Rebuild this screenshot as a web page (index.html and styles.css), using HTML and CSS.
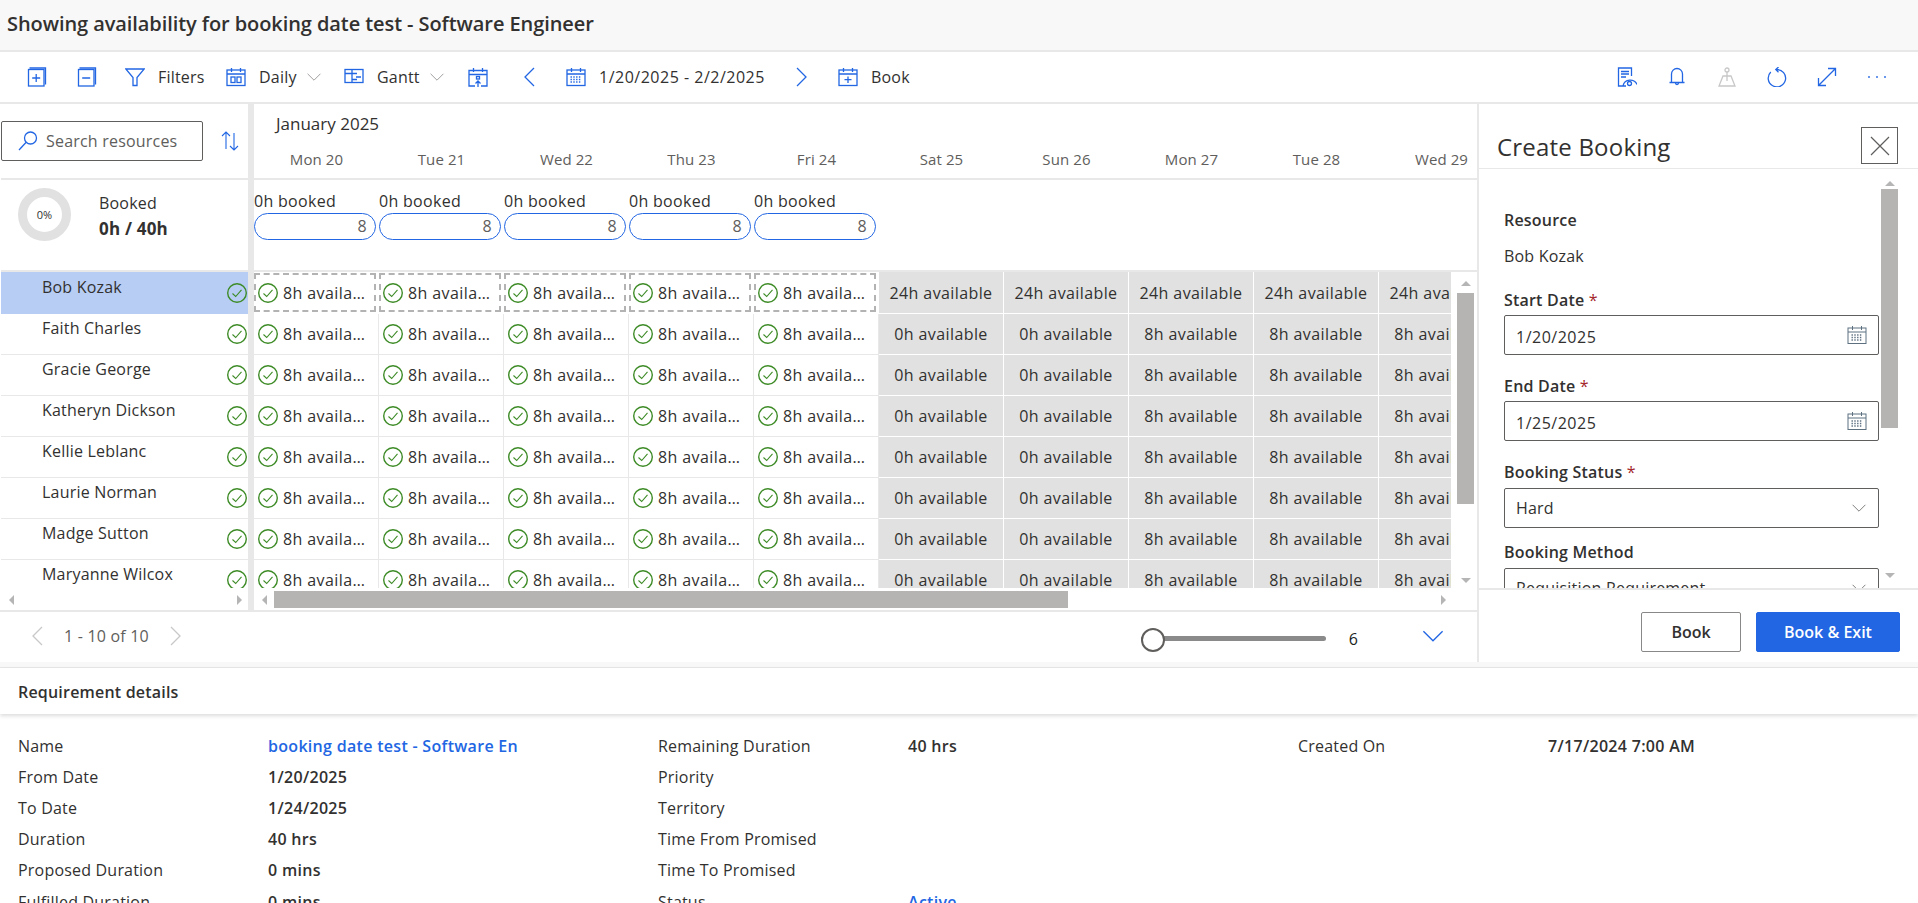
FILE: index.html
```html
<!DOCTYPE html>
<html lang="en">
  <head>
    <meta charset="UTF-8" />
    <title>Showing availability</title>
    <link rel="stylesheet" href="styles.css">
  </head>
  <body>
    <!-- Icon sprite -->
    <svg class="sprite">
      <symbol id="i-expand-all" viewBox="0 0 20 20"><rect x="1.5" y="2.5" width="15.5" height="16.5"/><path d="M2.5 1H18.5V17.5M9.2 7v8M5.2 11h8"/></symbol>
      <symbol id="i-collapse-all" viewBox="0 0 20 20"><rect x="1.5" y="2.5" width="15.5" height="16.5"/><path d="M2.5 1H18.5V17.5M5.2 11h8"/></symbol>
      <symbol id="i-filter" viewBox="0 0 20 20"><path d="M.8 2H19.2L12 10.5V18.5H8V10.5Z"/></symbol>
      <symbol id="i-daily" viewBox="0 0 20 20"><rect x="1" y="3" width="18" height="15.5"/><path d="M1 7H19M5.5 1v4M14.5 1v4"/><rect x="5" y="10" width="4" height="5.5"/><rect x="11" y="10" width="4" height="5.5"/></symbol>
      <symbol id="i-gantt" viewBox="0 0 20 20"><rect x="1" y="2.5" width="18" height="13"/><path d="M1 6.5H8M8 2.5V15.5M8 6.5H13M12 10H17M8 12.5H13"/></symbol>
      <symbol id="i-cal-up" viewBox="0 0 20 20"><path d="M7 19H1V3.5H19V19H13M1 7.5H19M5.5 1v4M14.5 1v4M10 20V14M7.5 16.5L10 14L12.5 16.5"/><rect x="8.5" y="9.5" width="3" height="2.5"/></symbol>
      <symbol id="i-left" viewBox="0 0 20 20"><path d="M14 1L5 10L14 19"/></symbol>
      <symbol id="i-right" viewBox="0 0 20 20"><path d="M6 1L15 10L6 19"/></symbol>
      <symbol id="i-cal-grid" viewBox="0 0 20 20"><rect x="1" y="3" width="18" height="15.5"/><path d="M1 7H19M5.5 1v4M14.5 1v4"/><path class="dotted" d="M4.5 10h11M4.5 12.5h11M4.5 15h11"/></symbol>
      <symbol id="i-book" viewBox="0 0 20 20"><rect x="1" y="3" width="18" height="15.5"/><path d="M1 7H19M5.5 1v4M14.5 1v4M10 9.5v6.5M6.5 12.7h7"/></symbol>
      <symbol id="i-report" viewBox="0 0 20 20"><path d="M9 19H1.5V1H14.5V9M4 4.5H12M4 7H12M4 10H9M6 19C7.5 11.5 17.5 11.5 20 17.5"/><circle cx="12.5" cy="16.5" r="2"/></symbol>
      <symbol id="i-bell" viewBox="0 0 20 20"><path d="M4.5 15.5V7a5.5 5.5 0 0 1 11 0v8.5M2.5 15.5H17.5M8.5 16a1.5 1.5 0 0 0 3 0"/></symbol>
      <symbol id="i-pin" viewBox="0 0 20 20"><circle cx="10" cy="3" r="2"/><path d="M10 5V14M6 9H14L18 19H2Z"/></symbol>
      <symbol id="i-refresh" viewBox="0 0 20 20"><path d="M9.5 2.5A8.7 8.7 0 1 1 3.8 5M11.5 0L8.8 2.6L11.5 5.2"/></symbol>
      <symbol id="i-fullscreen" viewBox="0 0 20 20"><path d="M1.5 18.5L18.5 1.5M11 1.5H18.5V9M1.5 11V18.5H9"/></symbol>
      <symbol id="i-more" viewBox="0 0 20 20"><path class="dots" d="M2 10h.01M10 10h.01M18 10h.01"/></symbol>
      <symbol id="i-search" viewBox="0 0 20 20"><circle cx="12.5" cy="7" r="6"/><path d="M8.2 11.3L1 19"/></symbol>
      <symbol id="i-sort" viewBox="0 0 20 20"><path d="M6 1V18M2 5L6 1L10 5M14 2V19M10 15L14 19L18 15"/></symbol>
      <symbol id="i-down" viewBox="0 0 20 20"><path d="M2 6L10 14L18 6"/></symbol>
      <symbol id="i-close" viewBox="0 0 20 20"><path d="M1 1L19 19M19 1L1 19"/></symbol>
      <symbol id="i-ok" viewBox="0 0 20 20"><circle cx="10" cy="10" r="9.3"/><path class="tick" d="M5.5 10.5L8.7 13.5L14.5 6.8"/></symbol>
    </svg>

    <header class="title-bar">Showing availability for booking date test - Software Engineer</header>

    <nav class="toolbar">
      <div class="tool"><svg class="ico"><use href="#i-expand-all"/></svg></div>
      <div class="tool"><svg class="ico"><use href="#i-collapse-all"/></svg></div>
      <div class="tool"><svg class="ico"><use href="#i-filter"/></svg><span>Filters</span></div>
      <div class="tool"><svg class="ico"><use href="#i-daily"/></svg><span>Daily</span><svg class="ico-chev"><use href="#i-down"/></svg></div>
      <div class="tool"><svg class="ico"><use href="#i-gantt"/></svg><span>Gantt</span><svg class="ico-chev"><use href="#i-down"/></svg></div>
      <div class="tool"><svg class="ico"><use href="#i-cal-up"/></svg></div>
      <div class="tool"><svg class="ico"><use href="#i-left"/></svg></div>
      <div class="tool"><svg class="ico"><use href="#i-cal-grid"/></svg><span class="num">1/20/2025 - 2/2/2025</span></div>
      <div class="tool"><svg class="ico"><use href="#i-right"/></svg></div>
      <div class="tool"><svg class="ico"><use href="#i-book"/></svg><span>Book</span></div>
      <div class="tool-end">
        <svg class="ico"><use href="#i-report"/></svg>
        <svg class="ico"><use href="#i-bell"/></svg>
        <svg class="ico ico-off"><use href="#i-pin"/></svg>
        <svg class="ico"><use href="#i-refresh"/></svg>
        <svg class="ico"><use href="#i-fullscreen"/></svg>
        <svg class="ico"><use href="#i-more"/></svg>
      </div>
    </nav>

    <div class="workspace">
      <section class="board">
        <div class="board-main">
          <!-- Resource column -->
          <div class="res-col">
            <div class="band-top res-search">
              <div class="search-box"><svg class="ico-search"><use href="#i-search"/></svg><span>Search resources</span></div>
              <svg class="ico-sort"><use href="#i-sort"/></svg>
            </div>
            <div class="band-sum res-sum">
              <div class="ring">0%</div>
              <div class="res-sum-text">
                <div>Booked</div>
                <div class="strong">0h / 40h</div>
              </div>
            </div>
            <div class="names">
              <div class="name-row selected"><span>Bob Kozak</span><svg class="ok"><use href="#i-ok"/></svg></div>
              <div class="name-row"><span>Faith Charles</span><svg class="ok"><use href="#i-ok"/></svg></div>
              <div class="name-row"><span>Gracie George</span><svg class="ok"><use href="#i-ok"/></svg></div>
              <div class="name-row"><span>Katheryn Dickson</span><svg class="ok"><use href="#i-ok"/></svg></div>
              <div class="name-row"><span>Kellie Leblanc</span><svg class="ok"><use href="#i-ok"/></svg></div>
              <div class="name-row"><span>Laurie Norman</span><svg class="ok"><use href="#i-ok"/></svg></div>
              <div class="name-row"><span>Madge Sutton</span><svg class="ok"><use href="#i-ok"/></svg></div>
              <div class="name-row"><span>Maryanne Wilcox</span><svg class="ok"><use href="#i-ok"/></svg></div>
            </div>
            <div class="hbar hbar-res"><i class="arrow-left"></i><i class="arrow-right"></i></div>
          </div>

          <!-- Schedule -->
          <div class="sched-col">
            <div class="band-top sched-head">
              <div class="month">January 2025</div>
              <div class="days">
                <div>Mon 20</div><div>Tue 21</div><div>Wed 22</div><div>Thu 23</div><div>Fri 24</div>
                <div>Sat 25</div><div>Sun 26</div><div>Mon 27</div><div>Tue 28</div><div>Wed 29</div>
              </div>
            </div>
            <div class="band-sum totals">
              <div class="total"><div>0h booked</div><div class="pill">8</div></div>
              <div class="total"><div>0h booked</div><div class="pill">8</div></div>
              <div class="total"><div>0h booked</div><div class="pill">8</div></div>
              <div class="total"><div>0h booked</div><div class="pill">8</div></div>
              <div class="total"><div>0h booked</div><div class="pill">8</div></div>
            </div>
            <div class="sched-body">
              <div class="grid">
                <div class="row row-first">
                  <div class="cell picked"><svg class="ok"><use href="#i-ok"/></svg><span>8h available</span></div>
                  <div class="cell picked"><svg class="ok"><use href="#i-ok"/></svg><span>8h available</span></div>
                  <div class="cell picked"><svg class="ok"><use href="#i-ok"/></svg><span>8h available</span></div>
                  <div class="cell picked"><svg class="ok"><use href="#i-ok"/></svg><span>8h available</span></div>
                  <div class="cell picked"><svg class="ok"><use href="#i-ok"/></svg><span>8h available</span></div>
                  <div class="off">24h available</div><div class="off">24h available</div><div class="off">24h available</div><div class="off">24h available</div><div class="off">24h available</div>
                </div>
                <div class="row">
                  <div class="cell"><svg class="ok"><use href="#i-ok"/></svg><span>8h available</span></div>
                  <div class="cell"><svg class="ok"><use href="#i-ok"/></svg><span>8h available</span></div>
                  <div class="cell"><svg class="ok"><use href="#i-ok"/></svg><span>8h available</span></div>
                  <div class="cell"><svg class="ok"><use href="#i-ok"/></svg><span>8h available</span></div>
                  <div class="cell"><svg class="ok"><use href="#i-ok"/></svg><span>8h available</span></div>
                  <div class="off">0h available</div><div class="off">0h available</div><div class="off">8h available</div><div class="off">8h available</div><div class="off">8h available</div>
                </div>
                <div class="row">
                  <div class="cell"><svg class="ok"><use href="#i-ok"/></svg><span>8h available</span></div>
                  <div class="cell"><svg class="ok"><use href="#i-ok"/></svg><span>8h available</span></div>
                  <div class="cell"><svg class="ok"><use href="#i-ok"/></svg><span>8h available</span></div>
                  <div class="cell"><svg class="ok"><use href="#i-ok"/></svg><span>8h available</span></div>
                  <div class="cell"><svg class="ok"><use href="#i-ok"/></svg><span>8h available</span></div>
                  <div class="off">0h available</div><div class="off">0h available</div><div class="off">8h available</div><div class="off">8h available</div><div class="off">8h available</div>
                </div>
                <div class="row">
                  <div class="cell"><svg class="ok"><use href="#i-ok"/></svg><span>8h available</span></div>
                  <div class="cell"><svg class="ok"><use href="#i-ok"/></svg><span>8h available</span></div>
                  <div class="cell"><svg class="ok"><use href="#i-ok"/></svg><span>8h available</span></div>
                  <div class="cell"><svg class="ok"><use href="#i-ok"/></svg><span>8h available</span></div>
                  <div class="cell"><svg class="ok"><use href="#i-ok"/></svg><span>8h available</span></div>
                  <div class="off">0h available</div><div class="off">0h available</div><div class="off">8h available</div><div class="off">8h available</div><div class="off">8h available</div>
                </div>
                <div class="row">
                  <div class="cell"><svg class="ok"><use href="#i-ok"/></svg><span>8h available</span></div>
                  <div class="cell"><svg class="ok"><use href="#i-ok"/></svg><span>8h available</span></div>
                  <div class="cell"><svg class="ok"><use href="#i-ok"/></svg><span>8h available</span></div>
                  <div class="cell"><svg class="ok"><use href="#i-ok"/></svg><span>8h available</span></div>
                  <div class="cell"><svg class="ok"><use href="#i-ok"/></svg><span>8h available</span></div>
                  <div class="off">0h available</div><div class="off">0h available</div><div class="off">8h available</div><div class="off">8h available</div><div class="off">8h available</div>
                </div>
                <div class="row">
                  <div class="cell"><svg class="ok"><use href="#i-ok"/></svg><span>8h available</span></div>
                  <div class="cell"><svg class="ok"><use href="#i-ok"/></svg><span>8h available</span></div>
                  <div class="cell"><svg class="ok"><use href="#i-ok"/></svg><span>8h available</span></div>
                  <div class="cell"><svg class="ok"><use href="#i-ok"/></svg><span>8h available</span></div>
                  <div class="cell"><svg class="ok"><use href="#i-ok"/></svg><span>8h available</span></div>
                  <div class="off">0h available</div><div class="off">0h available</div><div class="off">8h available</div><div class="off">8h available</div><div class="off">8h available</div>
                </div>
                <div class="row">
                  <div class="cell"><svg class="ok"><use href="#i-ok"/></svg><span>8h available</span></div>
                  <div class="cell"><svg class="ok"><use href="#i-ok"/></svg><span>8h available</span></div>
                  <div class="cell"><svg class="ok"><use href="#i-ok"/></svg><span>8h available</span></div>
                  <div class="cell"><svg class="ok"><use href="#i-ok"/></svg><span>8h available</span></div>
                  <div class="cell"><svg class="ok"><use href="#i-ok"/></svg><span>8h available</span></div>
                  <div class="off">0h available</div><div class="off">0h available</div><div class="off">8h available</div><div class="off">8h available</div><div class="off">8h available</div>
                </div>
                <div class="row">
                  <div class="cell"><svg class="ok"><use href="#i-ok"/></svg><span>8h available</span></div>
                  <div class="cell"><svg class="ok"><use href="#i-ok"/></svg><span>8h available</span></div>
                  <div class="cell"><svg class="ok"><use href="#i-ok"/></svg><span>8h available</span></div>
                  <div class="cell"><svg class="ok"><use href="#i-ok"/></svg><span>8h available</span></div>
                  <div class="cell"><svg class="ok"><use href="#i-ok"/></svg><span>8h available</span></div>
                  <div class="off">0h available</div><div class="off">0h available</div><div class="off">8h available</div><div class="off">8h available</div><div class="off">8h available</div>
                </div>
              </div>
              <div class="vbar vbar-grid"><i class="arrow-up"></i><div class="vthumb"></div><i class="arrow-down"></i></div>
            </div>
            <div class="hbar"><i class="arrow-left"></i><div class="hthumb"></div><i class="arrow-right"></i></div>
          </div>
        </div>

        <div class="pager">
          <svg class="pager-chev"><use href="#i-left"/></svg>
          <span class="pager-text">1 - 10 of 10</span>
          <svg class="pager-chev"><use href="#i-right"/></svg>
          <div class="slider"></div>
          <span class="slider-val">6</span>
          <svg class="ico-collapse"><use href="#i-down"/></svg>
        </div>
      </section>

      <!-- Create booking panel -->
      <aside class="panel">
        <div class="panel-head">
          <h2>Create Booking</h2>
          <button class="close-btn"><svg class="ico-close"><use href="#i-close"/></svg></button>
        </div>
        <div class="panel-body">
          <div class="form">
            <div class="field-read">
              <div class="lbl">Resource</div>
              <div class="read-val">Bob Kozak</div>
            </div>
            <div class="field">
              <div class="lbl">Start Date <em>*</em></div>
              <div class="input"><span class="num">1/20/2025</span><svg class="ico-cal"><use href="#i-cal-grid"/></svg></div>
            </div>
            <div class="field">
              <div class="lbl">End Date <em>*</em></div>
              <div class="input"><span class="num">1/25/2025</span><svg class="ico-cal"><use href="#i-cal-grid"/></svg></div>
            </div>
            <div class="field field-select">
              <div class="lbl">Booking Status <em>*</em></div>
              <div class="input"><span>Hard</span><svg class="ico-select"><use href="#i-down"/></svg></div>
            </div>
            <div class="field field-select">
              <div class="lbl">Booking Method</div>
              <div class="input"><span>Requisition Requirement</span><svg class="ico-select"><use href="#i-down"/></svg></div>
            </div>
          </div>
          <div class="vbar vbar-panel"><i class="arrow-up"></i><div class="vthumb"></div><i class="arrow-down"></i></div>
        </div>
        <div class="panel-foot">
          <button class="btn">Book</button>
          <button class="btn btn-primary">Book &amp; Exit</button>
        </div>
      </aside>
    </div>

    <div class="spacer"></div>

    <div class="req-head">Requirement details</div>
    <div class="details">
      <dl class="detail-col">
        <dt>Name</dt><dd class="link">booking date test - Software En</dd>
        <dt>From Date</dt><dd>1/20/2025</dd>
        <dt>To Date</dt><dd>1/24/2025</dd>
        <dt>Duration</dt><dd>40 hrs</dd>
        <dt>Proposed Duration</dt><dd>0 mins</dd>
        <dt>Fulfilled Duration</dt><dd>0 mins</dd>
      </dl>
      <dl class="detail-col">
        <dt>Remaining Duration</dt><dd>40 hrs</dd>
        <dt>Priority</dt><dd></dd>
        <dt>Territory</dt><dd></dd>
        <dt>Time From Promised</dt><dd></dd>
        <dt>Time To Promised</dt><dd></dd>
        <dt>Status</dt><dd class="link">Active</dd>
      </dl>
      <dl class="detail-col">
        <dt>Created On</dt><dd>7/17/2024 7:00 AM</dd>
      </dl>
    </div>
  </body>
</html>
```

FILE: styles.css
```css
:root {
  --blue: #2266e3;
  --line: #e8e8e8;
  --text: #323130;
  --thumb: #b5b4b2;
  --green: #3d8b26;
}

* {
  margin: 0;
  padding: 0;
  box-sizing: border-box;
}

html,
body {
  height: 903px;
  overflow: hidden;
}

body {
  background: white;
  color: var(--text);
  font-family: "Open Sans", "Noto Sans", sans-serif;
  font-size: 16px;
  letter-spacing: 0.2px;
  line-height: 22px;
}

.sprite {
  display: none;
}

svg {
  fill: none;
  stroke: currentColor;
  stroke-width: 1.3;
  flex: none;
}

.dotted {
  stroke-width: 1.3;
  stroke-dasharray: 1.4 1.4;
}

.dots {
  stroke-width: 1.8;
  stroke-linecap: round;
}

.tick {
  stroke-width: 1.1;
}

.num {
  letter-spacing: 0.5px;
}

/* Title and toolbar */
.title-bar {
  height: 52px;
  padding: 13px 0 0 7px;
  background: #f8f8f8;
  border-bottom: 2px solid var(--line);
  font-size: 20px;
  font-weight: 600;
  letter-spacing: -0.08px;
}

.toolbar {
  display: grid;
  grid-template-columns: 50px 48px 101px 118px 124px 52px 46px 225px 47px 100px 1fr;
  height: 52px;
  padding-left: 27px;
  border-bottom: 2px solid var(--line);
  align-items: center;
}

.tool {
  display: flex;
  align-items: center;
  gap: 13px;
}

.ico {
  width: 20px;
  height: 20px;
  color: var(--blue);
}

.ico-off {
  color: #c8c8c8;
}

.ico-chev {
  width: 16px;
  height: 16px;
  margin-left: -4px;
  color: #8a8886;
  stroke-width: 1;
}

.tool-end {
  display: flex;
  justify-content: flex-end;
  gap: 30px;
  padding-right: 31px;
}

/* Board */
.workspace {
  display: flex;
  height: 558px;
}

.board {
  width: 1479px;
  border-right: 2px solid var(--line);
}

.board-main {
  display: flex;
  height: 508px;
  border-bottom: 2px solid var(--line);
}

.res-col {
  width: 254px;
  padding-left: 1px;
  border-right: 6px solid var(--line);
}

.sched-col {
  width: 1223px;
}

.band-top {
  height: 76px;
  border-bottom: 2px solid var(--line);
}

.band-sum {
  height: 92px;
  border-bottom: 2px solid var(--line);
}

.res-search {
  display: flex;
  padding-top: 17px;
}

.search-box {
  display: flex;
  align-items: center;
  gap: 8px;
  width: 202px;
  height: 40px;
  padding-left: 16px;
  border: 1px solid #605e5c;
  border-radius: 2px;
  color: #605e5c;
}

.ico-search {
  width: 20px;
  height: 20px;
  color: var(--blue);
}

.ico-sort {
  width: 20px;
  height: 20px;
  margin: 10px 0 0 17px;
  color: var(--blue);
  stroke-width: 1.1;
}

.res-sum {
  display: flex;
  padding: 8px 0 0 17px;
}

.ring {
  display: flex;
  align-items: center;
  justify-content: center;
  width: 53px;
  height: 53px;
  border: 9px solid #e1e1e1;
  border-radius: 50%;
  font-size: 11px;
  letter-spacing: 0;
}

.res-sum-text {
  margin-left: 28px;
  padding-top: 3px;
  line-height: 25px;
}

.strong {
  font-size: 17px;
  font-weight: 700;
}

.name-row {
  display: flex;
  justify-content: space-between;
  align-items: center;
  height: 41px;
  padding-right: 1px;
  border-bottom: 1px solid var(--line);
}

.name-row span {
  align-self: flex-start;
  margin: 3px 0 0 41px;
}

.names {
  height: 316px;
  overflow: hidden;
}

.selected {
  height: 42px;
  background: #b7cdf4;
  border-bottom: none;
}

.selected span {
  margin-top: 4px;
}

.ok {
  width: 20px;
  height: 20px;
  color: var(--green);
  stroke-width: 1.4;
}

.month {
  padding: 9px 0 0 22px;
  font-size: 17px;
  font-weight: 500;
  letter-spacing: 0;
}

.days {
  display: flex;
  margin-top: 13px;
  font-size: 15px;
  letter-spacing: 0.1px;
  color: #605e5c;
}

.days div {
  flex: 0 0 125px;
  text-align: center;
}

.totals {
  display: flex;
  padding-top: 10px;
}

.total {
  flex: 0 0 125px;
  letter-spacing: 0.3px;
}

.pill {
  width: 122px;
  height: 27px;
  margin-top: 1px;
  padding-right: 8px;
  border: 1px solid var(--blue);
  border-radius: 14px;
  color: #605e5c;
  line-height: 25px;
  text-align: right;
}

.sched-body {
  display: flex;
  height: 319px;
}

.grid {
  width: 1199px;
  height: 316px;
  overflow: hidden;
}

.row {
  display: flex;
  height: 41px;
  letter-spacing: 0.4px;
}

.row-first {
  height: 42px;
}

.cell {
  display: flex;
  align-items: center;
  gap: 5px;
  flex: 0 0 125px;
  padding-left: 4px;
  border-right: 1px solid var(--line);
  border-bottom: 1px solid var(--line);
}

.cell span {
  width: 85px;
  overflow: hidden;
  white-space: nowrap;
  text-overflow: ellipsis;
}

.picked {
  flex-basis: 122px;
  height: 39px;
  margin: 1px 3px 2px 0;
  padding-left: 2px;
  border: 2px dashed #b3b3b3;
}

.picked span {
  padding-top: 1px;
}

.off {
  flex: 0 0 125px;
  background: #e1e1e1;
  border-right: 1px solid white;
  border-bottom: 1px solid white;
  line-height: 40px;
  text-align: center;
}

.row-first .off {
  line-height: 43px;
}

/* Scrollbars */
.vbar {
  display: flex;
  flex-direction: column;
  align-items: center;
}

.vbar-grid {
  width: 24px;
  padding: 9px 0 8px 1px;
  margin-left: 2px;
}

.vbar-grid .vthumb {
  height: 211px;
  margin-top: 7px;
}

.vbar-panel {
  width: 17px;
  margin-left: 2px;
  padding: 12px 0 10px;
}

.vbar-panel .vthumb {
  height: 239px;
  margin-top: 3px;
}

.vthumb {
  width: 17px;
  flex: none;
  background: var(--thumb);
}

.hbar {
  display: flex;
  align-items: center;
  height: 17px;
  padding: 0 31px 0 8px;
}

.hbar-res {
  margin-top: 3px;
  padding: 0 6px 0 8px;
}

.hthumb {
  width: 794px;
  height: 17px;
  margin-left: 7px;
  background: var(--thumb);
}

.arrow-up,
.arrow-down,
.arrow-left,
.arrow-right {
  width: 0;
  height: 0;
  flex: none;
  border: 0 solid transparent;
}

.arrow-up {
  border-width: 0 5px 5px;
  border-bottom-color: #b5b5b5;
}

.arrow-down {
  margin-top: auto;
  border-width: 5px 5px 0;
  border-top-color: #b5b5b5;
}

.arrow-left {
  border-width: 5px 5px 5px 0;
  border-right-color: #b5b5b5;
}

.arrow-right {
  margin-left: auto;
  border-width: 5px 0 5px 5px;
  border-left-color: #b5b5b5;
}

/* Pager */
.pager {
  display: flex;
  align-items: center;
  height: 48px;
  padding: 0 32px 0 28px;
}

.pager-chev {
  width: 20px;
  height: 20px;
  color: #c8c8c8;
}

.pager-text {
  margin: 0 16px;
  color: #605e5c;
}

.slider {
  position: relative;
  width: 185px;
  height: 5px;
  margin: 5px 0 0 auto;
  background: #8a8a8a;
  border-radius: 3px;
}

.slider::before {
  content: "";
  position: absolute;
  top: -8px;
  left: 0;
  width: 20px;
  height: 20px;
  background: white;
  border: 2px solid #605e5c;
  border-radius: 50%;
}

.slider-val {
  margin: 6px 0 0 23px;
  color: #201f1e;
}

.ico-collapse {
  width: 24px;
  height: 24px;
  margin-left: 63px;
  color: var(--blue);
  stroke-width: 1.1;
}

/* Booking panel */
.panel {
  width: 439px;
}

.panel-head {
  display: flex;
  height: 65px;
  padding: 23px 20px 0 18px;
  justify-content: space-between;
  border-bottom: 1px solid var(--line);
}

.panel-head h2 {
  padding-top: 4px;
  font-size: 24px;
  font-weight: 500;
  line-height: 32px;
}

.close-btn {
  width: 37px;
  height: 37px;
  background: white;
  border: 1px solid #605e5c;
  color: #605e5c;
}

.ico-close {
  display: block;
  width: 20px;
  height: 20px;
  margin: auto;
  stroke-width: 1.2;
}

.panel-body {
  display: flex;
  height: 419px;
  overflow: hidden;
  padding-left: 25px;
}

.form {
  width: 375px;
  flex: none;
  padding-top: 40px;
}

.lbl {
  font-weight: 600;
  margin-bottom: 4px;
}

.lbl em {
  color: #a4262c;
  font-style: normal;
  font-weight: 400;
}

.field-read {
  margin-bottom: 22px;
}

.read-val {
  margin-top: 14px;
}

.field {
  margin-bottom: 20px;
}

.field-select {
  margin-bottom: 13px;
}

.field-select .lbl {
  margin-bottom: 5px;
}

.input {
  display: flex;
  align-items: center;
  justify-content: space-between;
  height: 40px;
  padding: 0 11px;
  border: 1px solid #605e5c;
  border-radius: 2px;
}

.input .num {
  padding-top: 3px;
}

.ico-cal {
  width: 20px;
  height: 20px;
  color: #5c7080;
  stroke-width: 1;
}

.ico-select {
  width: 16px;
  height: 16px;
  color: #605e5c;
  stroke-width: 1;
}

.panel-foot {
  display: flex;
  justify-content: flex-end;
  gap: 15px;
  height: 74px;
  padding: 22px 18px 0 0;
  border-top: 2px solid var(--line);
}

.btn {
  width: 100px;
  height: 40px;
  background: white;
  border: 1px solid #8a8886;
  border-radius: 2px;
  color: var(--text);
  font: 600 16px "Open Sans", sans-serif;
}

.btn-primary {
  width: 144px;
  background: var(--blue);
  border-color: var(--blue);
  color: white;
}

/* Requirement details */
.spacer {
  height: 6px;
  background: #f8f8f8;
  border-bottom: 1px solid var(--line);
}

.req-head {
  position: relative;
  height: 46px;
  padding: 13px 0 0 18px;
  font-weight: 600;
  box-shadow: 0 2px 4px rgba(0, 0, 0, 0.14);
}

.details {
  display: flex;
  padding: 16px 0 0 18px;
}

.detail-col {
  display: grid;
  flex: 0 0 640px;
  grid-template-columns: 250px 1fr;
  grid-auto-rows: 31.2px;
  align-items: center;
  align-self: flex-start;
}

.detail-col dd {
  font-weight: 600;
  letter-spacing: 0.3px;
}

.link {
  color: var(--blue);
}
```
